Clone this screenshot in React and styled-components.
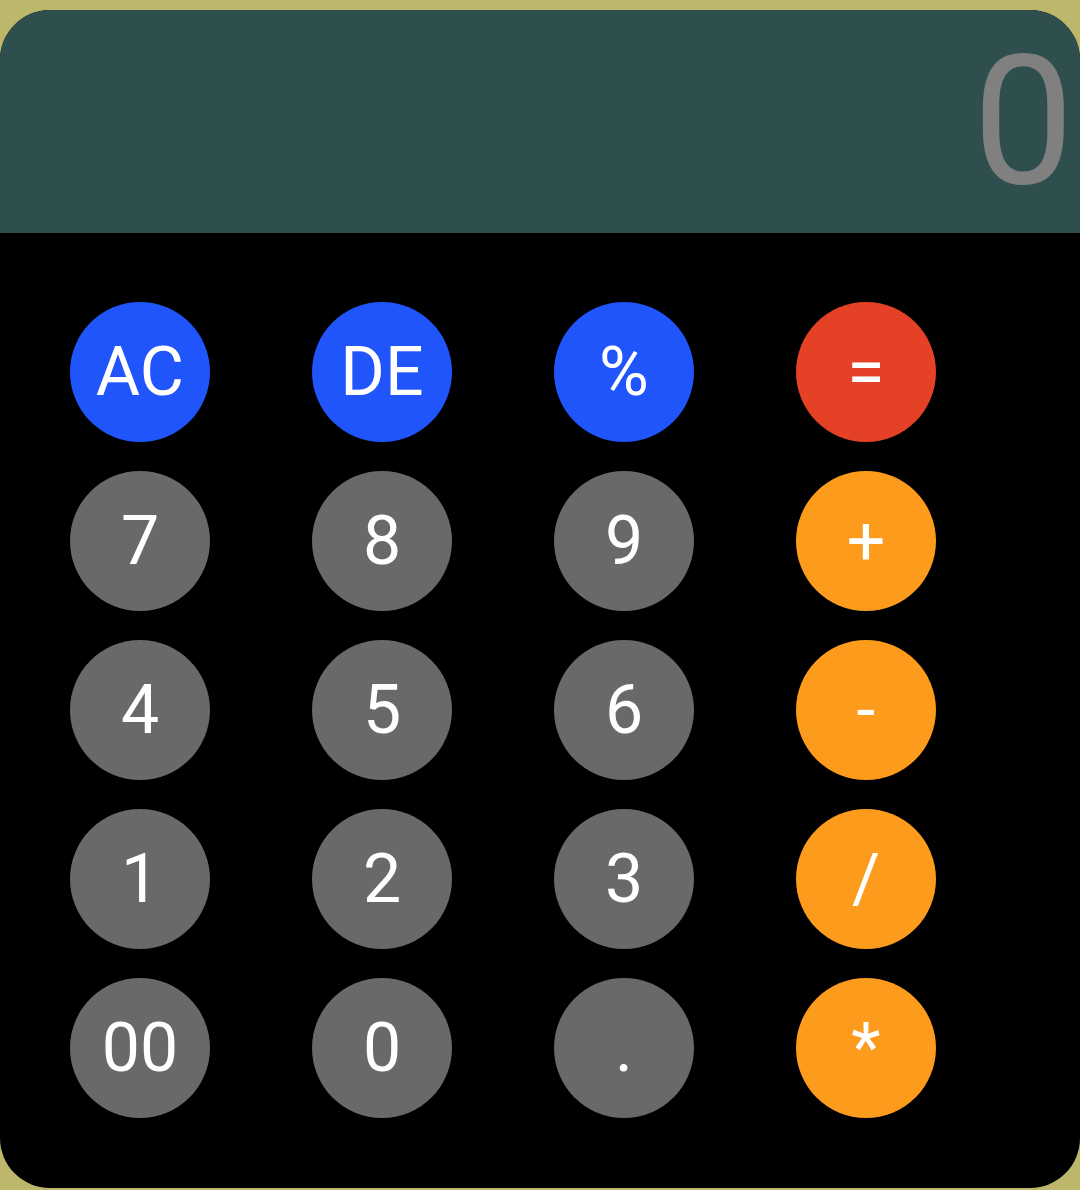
import styled, { createGlobalStyle } from 'styled-components';

const GlobalStyle = createGlobalStyle`
  html, body {
    margin: 0;
    padding: 0;
    background: #bdb76b;
  }
  body {
    font-family: Roboto, "Liberation Sans", sans-serif;
  }
`;

const Calculator = styled.div`
  margin-top: 10px;
  width: 1080px;
  height: 1178px;
  background: #000;
  border-radius: 50px;
  overflow: hidden;
  display: flex;
  flex-direction: column;
`;

const Display = styled.div`
  height: 223px;
  box-sizing: border-box;
  background: #2f4f4f;
  color: #808080;
  font-size: 180px;
  line-height: 1;
  text-align: right;
  padding: 22px 6px 0 0;
`;

const Keypad = styled.div`
  display: grid;
  grid-template-columns: repeat(4, 140px);
  column-gap: 102px;
  row-gap: 29px;
  padding: 69px 0 0 70px;
`;

const colors = {
  blue: '#1f55fb',
  red: '#e44126',
  orange: '#fd9b1c',
  gray: '#696969',
};

const Key = styled.button`
  width: 140px;
  height: 140px;
  border: none;
  border-radius: 50%;
  padding: 0;
  background: ${p => colors[p.$kind]};
  color: #fff;
  font-family: Roboto, "Liberation Sans", sans-serif;
  font-size: 68px;
  line-height: 1;
  display: flex;
  align-items: center;
  justify-content: center;
  cursor: pointer;
`;

const keys = [
  ['AC', 'blue'], ['DE', 'blue'], ['%', 'blue'], ['=', 'red'],
  ['7', 'gray'], ['8', 'gray'], ['9', 'gray'], ['+', 'orange'],
  ['4', 'gray'], ['5', 'gray'], ['6', 'gray'], ['-', 'orange'],
  ['1', 'gray'], ['2', 'gray'], ['3', 'gray'], ['/', 'orange'],
  ['00', 'gray'], ['0', 'gray'], ['.', 'gray'], ['*', 'orange'],
];

export default function App() {
  return (
    <>
      <GlobalStyle />
      <Calculator>
        <Display>0</Display>
        <Keypad>
          {keys.map(([label, kind]) => (
            <Key key={label} $kind={kind}>{label}</Key>
          ))}
        </Keypad>
      </Calculator>
    </>
  );
}
